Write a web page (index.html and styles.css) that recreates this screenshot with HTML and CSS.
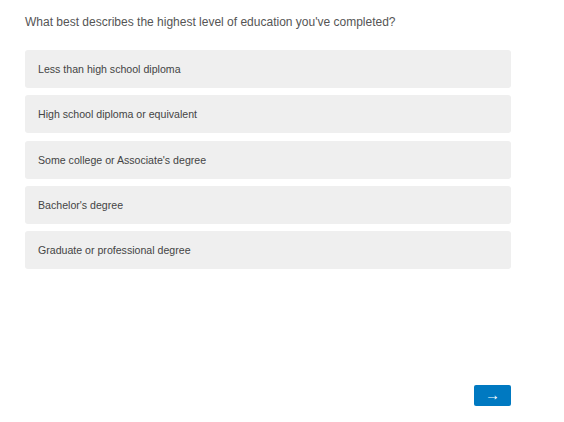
FILE: index.html
```html
<!DOCTYPE html>
<html>
<head>
<meta charset="utf-8">
<link rel="stylesheet" href="styles.css">
</head>
<body>
<div class="survey">
  <p class="question">What best describes the highest level of education you've completed?</p>
  <div class="options">
    <div class="option">Less than high school diploma</div>
    <div class="option">High school diploma or equivalent</div>
    <div class="option">Some college or Associate's degree</div>
    <div class="option">Bachelor's degree</div>
    <div class="option">Graduate or professional degree</div>
  </div>
  <div class="actions">
    <button class="next" type="button">→</button>
  </div>
</div>
</body>
</html>
```
FILE: styles.css
```css
html, body {
  margin: 0;
  padding: 0;
  background: #fff;
}
.survey {
  width: 486px;
  padding: 15px 0 0 25px;
  font-family: "Liberation Sans", Arial, sans-serif;
}
.question {
  margin: 0;
  font-size: 12px;
  line-height: 14px;
  color: #555;
}
.options {
  margin-top: 21px;
  display: flex;
  flex-direction: column;
  gap: 7.25px;
}
.option {
  height: 38px;
  box-sizing: border-box;
  padding: 0 13px;
  display: flex;
  align-items: center;
  background: #efefef;
  border-radius: 3px;
  font-size: 10.6px;
  color: #444;
}
.actions {
  margin-top: 116px;
  display: flex;
  justify-content: flex-end;
}
.next {
  width: 37px;
  height: 21px;
  border: none;
  border-radius: 2px;
  background: #0079c1;
  color: #fff;
  font-family: "Liberation Sans", sans-serif;
  font-size: 15px;
  line-height: 19px;
  padding: 0 0 2px;
}
```
